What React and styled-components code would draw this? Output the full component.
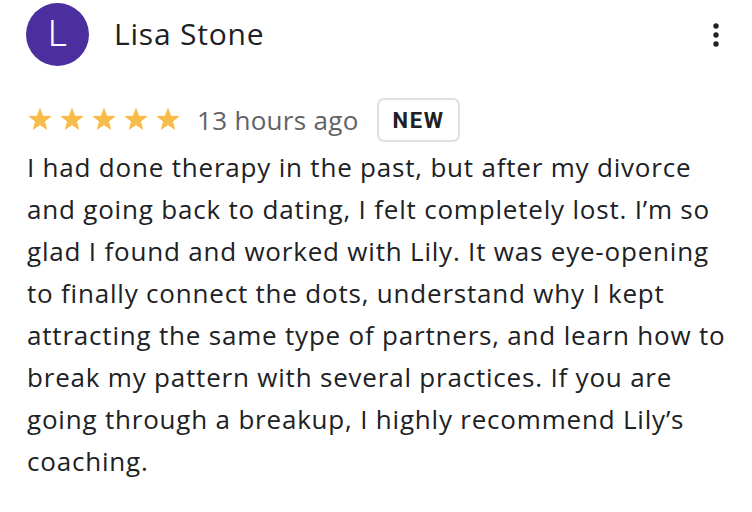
import React from 'react'
import styled, { createGlobalStyle } from 'styled-components'

const GlobalStyle = createGlobalStyle`
    body {
        margin: 0;
        background: #ffffff;
        font-family: "Open Sans", "Noto Sans", sans-serif;
    }
`

const review = {
    initial: 'L',
    name: 'Lisa Stone',
    rating: 5,
    when: '13 hours ago',
    text: 'I had done therapy in the past, but after my divorce and going back to dating, I felt completely lost. I’m so glad I found and worked with Lily. It was eye-opening to finally connect the dots, understand why I kept attracting the same type of partners, and learn how to break my pattern with several practices. If you are going through a breakup, I highly recommend Lily’s coaching.',
}

const Star = () => (
    <svg width="26" height="25" viewBox="0 0 26 25">
        <path fill="#f7bc4a" d="M13 0.5l3.1 8.2 8.8.4-6.9 5.5 2.4 8.5L13 18.2l-7.4 4.9 2.4-8.5-6.9-5.5 8.8-.4z" />
    </svg>
)

const MoreIcon = () => (
    <svg width="8" height="26" viewBox="0 0 8 26">
        <circle cx="4" cy="4" r="2.7" fill="#202124" />
        <circle cx="4" cy="13" r="2.7" fill="#202124" />
        <circle cx="4" cy="22" r="2.7" fill="#202124" />
    </svg>
)

const Review = () => (
    <Card>
        <Header>
            <Avatar>{review.initial}</Avatar>
            <Name>{review.name}</Name>
            <More><MoreIcon /></More>
        </Header>
        <Meta>
            <Stars>
                {Array.from({ length: review.rating }).map((_, i) => <Star key={i} />)}
            </Stars>
            <When>{review.when}</When>
            <Badge>NEW</Badge>
        </Meta>
        <Body>{review.text}</Body>
    </Card>
)

export default function App() {
    return (
        <>
            <GlobalStyle />
            <Review />
        </>
    )
}

const Card = styled.div`
    width: 752px;
    padding: 2px 20px 0 27px;
    box-sizing: border-box;
`
const Header = styled.div`
    display: flex;
    align-items: center;
    height: 64px;
`
const Avatar = styled.div`
    width: 63px;
    height: 63px;
    margin-left: -1px;
    border-radius: 50%;
    background: #4c2f9e;
    color: #ffffff;
    display: flex;
    align-items: center;
    justify-content: center;
    font-family: "Roboto", sans-serif;
    font-weight: 300;
    font-size: 36px;
    flex-shrink: 0;
`
const Name = styled.div`
    margin-left: 25px;
    font-size: 30px;
    letter-spacing: 0.8px;
    color: #202124;
    flex: 1;
    margin-top: -1px;
`
const More = styled.div`
    display: flex;
    align-items: center;
    margin-right: 12px;
    margin-top: 2px;
`
const Meta = styled.div`
    display: flex;
    align-items: center;
    margin-top: 32px;
    height: 44px;
`
const Stars = styled.div`
    display: flex;
    gap: 6px;
    margin-top: -2px;
`
const When = styled.span`
    margin-left: 16px;
    font-size: 26px;
    letter-spacing: 0.3px;
    color: #5f6368;
`
const Badge = styled.span`
    margin-left: 18px;
    height: 44px;
    box-sizing: border-box;
    padding: 0 13px 0 14px;
    display: flex;
    align-items: center;
    border: 2px solid #dfe1e5;
    border-radius: 7px;
    font-family: "Roboto", sans-serif;
    font-weight: 700;
    font-size: 22px;
    letter-spacing: 1.6px;
    color: #202124;
`
const Body = styled.p`
    margin: 4px 0 0;
    font-size: 26px;
    letter-spacing: 0.8px;
    line-height: 42px;
    color: #202124;
`
